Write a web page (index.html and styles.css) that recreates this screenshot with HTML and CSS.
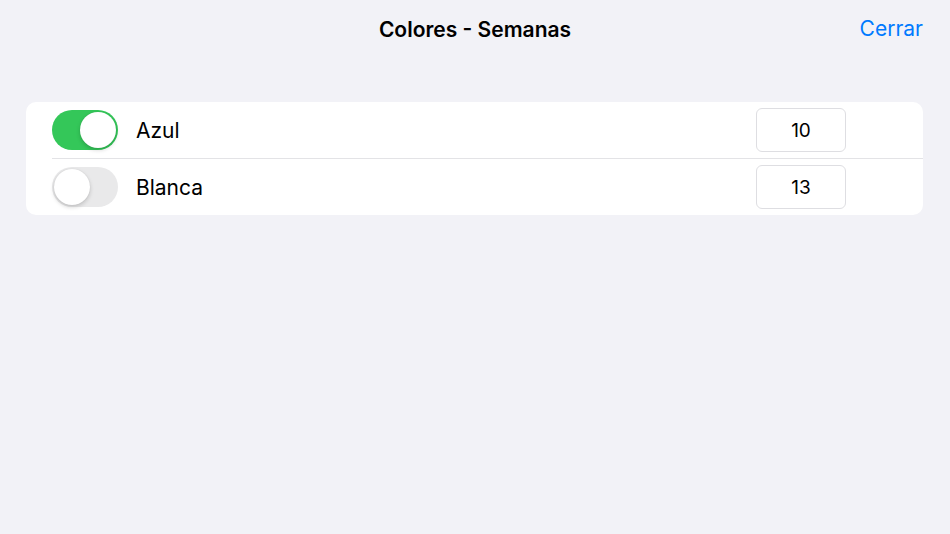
FILE: index.html
```html
<!DOCTYPE html>
<html lang="es">
<head>
    <meta charset="UTF-8">
    <meta name="viewport" content="width=device-width, initial-scale=1.0">
    <title>Colores - Semanas</title>
    <link rel="stylesheet" href="styles.css">
</head>
<body>
    <div class="navbar">
        <h1 class="title">Colores - Semanas</h1>
        <a class="close" href="#">Cerrar</a>
    </div>

    <div class="card">
        <div class="row">
            <label class="switch">
                <input type="checkbox" checked>
                <span class="slider"></span>
            </label>
            <span class="name">Azul</span>
            <input class="weeks" type="text" value="10">
        </div>
        <div class="row">
            <label class="switch">
                <input type="checkbox">
                <span class="slider"></span>
            </label>
            <span class="name">Blanca</span>
            <input class="weeks" type="text" value="13">
        </div>
    </div>
</body>
</html>
```

FILE: styles.css
```css
body {
    font-family: Inter, "Liberation Sans", sans-serif;
    margin: 0;
    padding: 0;
    background-color: #f2f2f7;
    color: #000;
}
.navbar {
    position: relative;
    height: 58px;
    display: flex;
    align-items: center;
    justify-content: center;
}
.title {
    margin: 0;
    font-size: 21px;
    font-weight: 600;
    letter-spacing: 0;
}
.close {
    position: absolute;
    right: 27px;
    top: 16px;
    font-size: 21px;
    color: #007aff;
    text-decoration: none;
}
.card {
    margin: 44px 27px 0 26px;
    background-color: #fff;
    border-radius: 10px;
    padding-left: 26px;
}
.row {
    height: 56px;
    display: flex;
    align-items: center;
    padding-right: 77px;
    border-bottom: 1px solid #e3e3e6;
}
.row:last-child {
    border-bottom: none;
}
.switch {
    position: relative;
    width: 66px;
    height: 40px;
    flex-shrink: 0;
}
.switch input {
    display: none;
}
.slider {
    position: absolute;
    inset: 0;
    border-radius: 20px;
    background-color: #e9e9ea;
}
.slider::before {
    content: "";
    position: absolute;
    left: 2px;
    top: 2px;
    width: 36px;
    height: 36px;
    border-radius: 50%;
    background-color: #fff;
    box-shadow: 0 2px 4px rgba(0, 0, 0, 0.18), 0 0 1px rgba(0, 0, 0, 0.1);
}
.switch input:checked + .slider {
    background-color: #34c759;
}
.switch input:checked + .slider::before {
    left: 28px;
}
.name {
    flex: 1;
    margin-left: 18px;
    font-size: 21px;
}
.weeks {
    width: 90px;
    height: 44px;
    box-sizing: border-box;
    border: 1px solid #dedee2;
    border-radius: 6px;
    text-align: center;
    font-family: inherit;
    font-size: 19px;
    color: #000;
    background: #fff;
}
```
